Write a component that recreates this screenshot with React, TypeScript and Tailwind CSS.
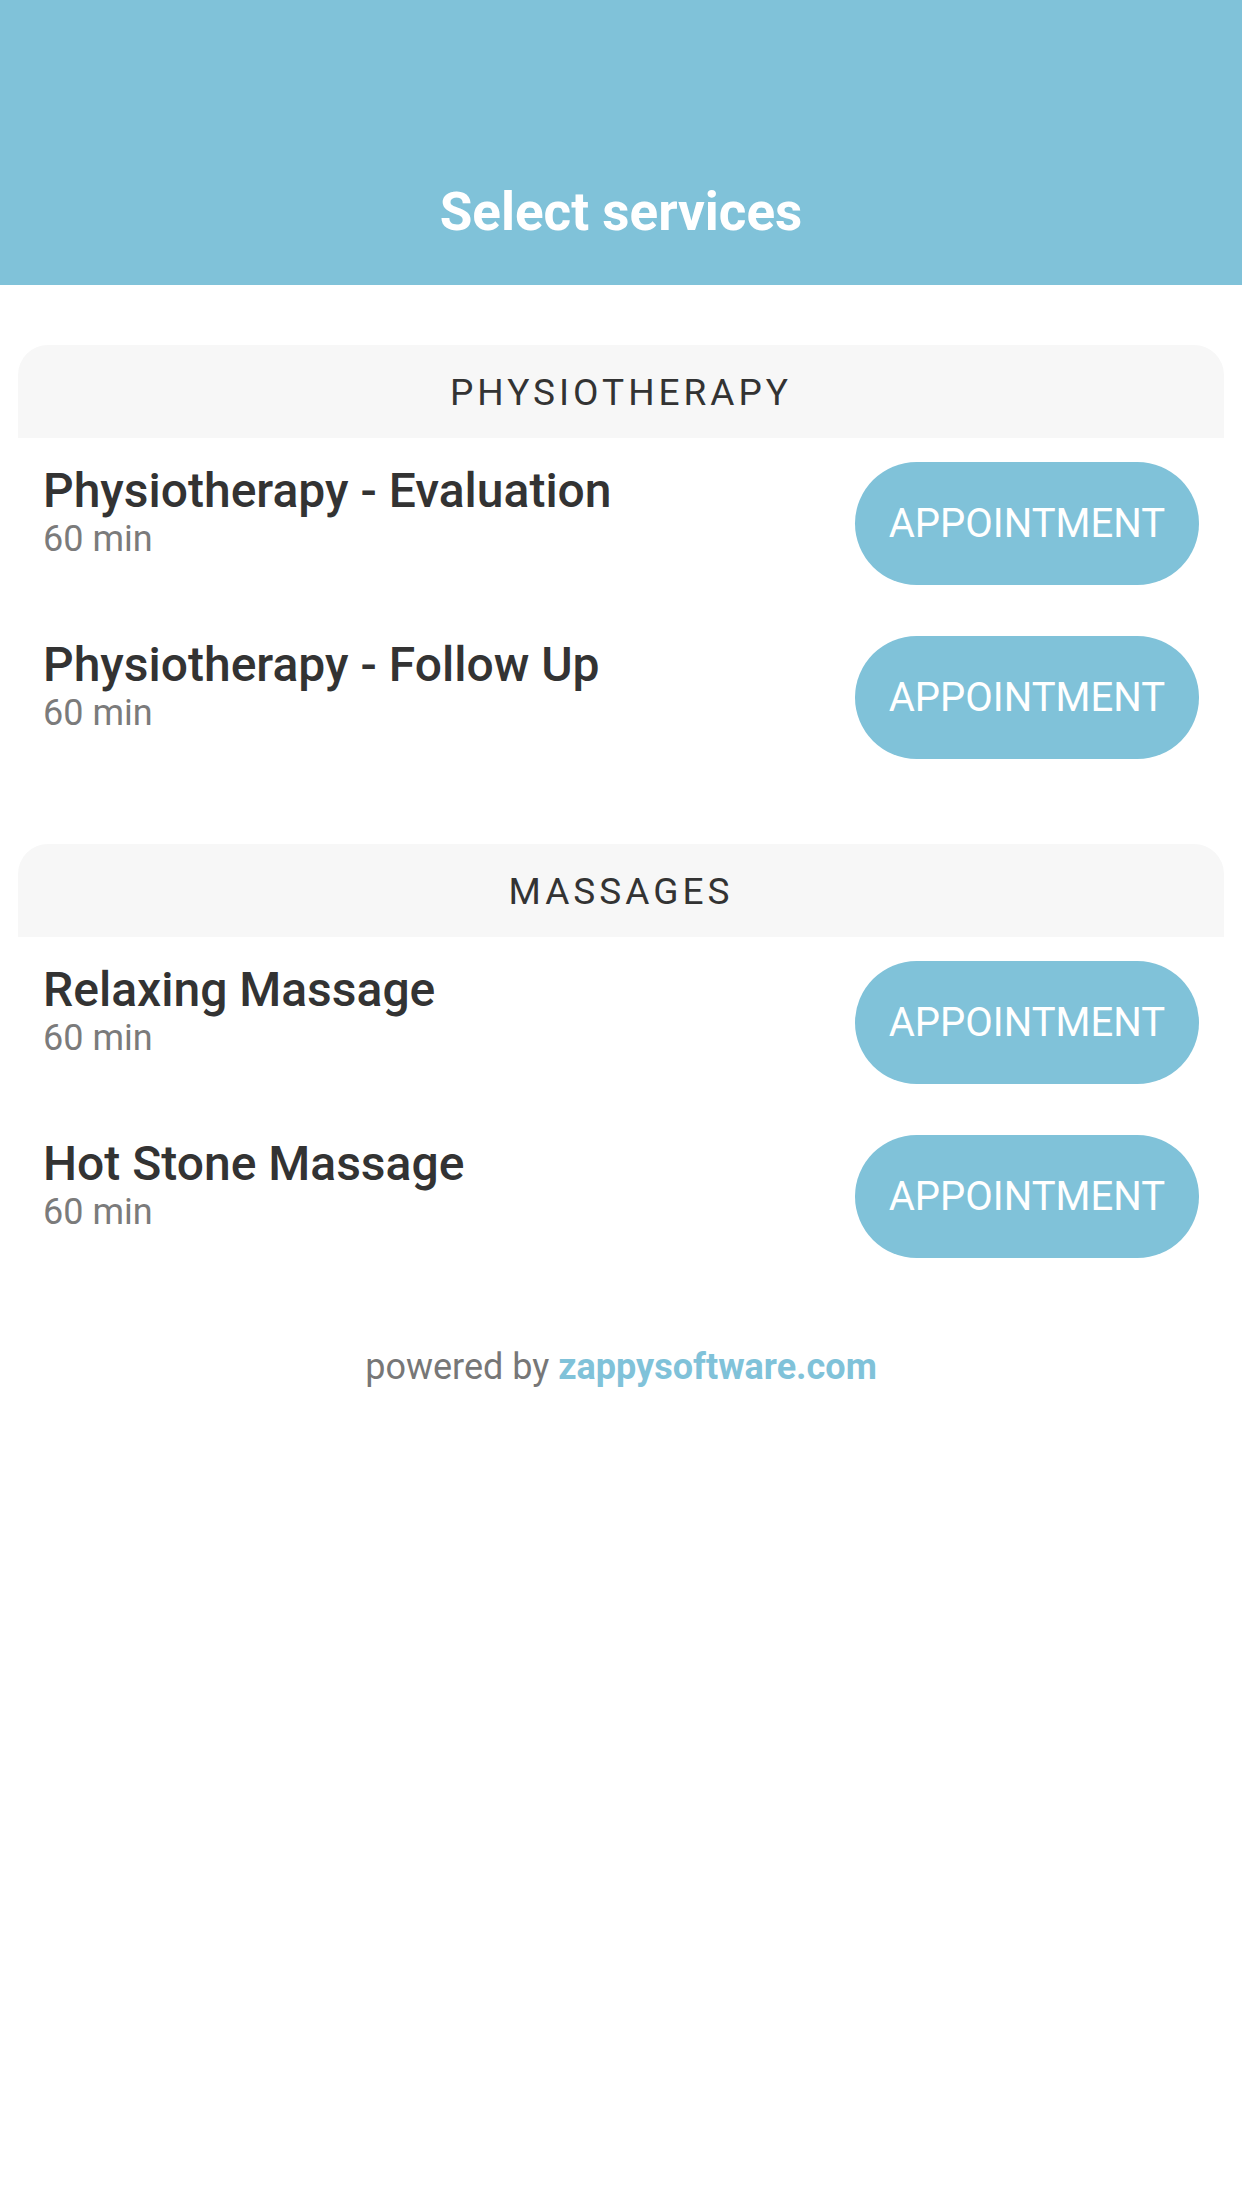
import React from "react";

type Service = {
  name: string;
  duration: string;
};

type Section = {
  title: string;
  services: Service[];
};

const sections: Section[] = [
  {
    title: "PHYSIOTHERAPY",
    services: [
      { name: "Physiotherapy - Evaluation", duration: "60 min" },
      { name: "Physiotherapy - Follow Up", duration: "60 min" },
    ],
  },
  {
    title: "MASSAGES",
    services: [
      { name: "Relaxing Massage", duration: "60 min" },
      { name: "Hot Stone Massage", duration: "60 min" },
    ],
  },
];

const ServiceRow = ({ service }: { service: Service }) => (
  <div className="flex items-start justify-between px-[25px] pt-[24px] pb-[27px]">
    <div className="flex flex-col pt-[2px]">
      <span className="text-[48px] leading-[54px] font-medium text-[#333333]">
        {service.name}
      </span>
      <span className="text-[36px] leading-[42px] text-[#7b7b7b]">{service.duration}</span>
    </div>
    <button
      type="button"
      className="h-[123px] px-[34px] rounded-full bg-[#80c2d9] text-white text-[40px] leading-none"
    >
      APPOINTMENT
    </button>
  </div>
);

const App = () => {
  return (
    <div className="min-h-screen bg-white font-['Roboto','Liberation_Sans',sans-serif]">
      {/* Top bar */}
      <header className="h-[285px] bg-[#80c2d9] flex items-end justify-center pb-[40px]">
        <h1 className="text-[53px] leading-[65px] font-bold text-white">Select services</h1>
      </header>

      <main className="px-[18px] pt-[60px]">
        {sections.map((section, i) => (
          <section key={section.title} className={i > 0 ? "mt-[58px]" : ""}>
            <div className="h-[93px] rounded-t-[30px] bg-[#f7f7f7] flex items-center justify-center">
              <span className="text-[37px] tracking-[4px] text-[#333333] pt-[2px]">
                {section.title}
              </span>
            </div>
            {section.services.map((service) => (
              <ServiceRow key={service.name} service={service} />
            ))}
          </section>
        ))}
      </main>

      <footer className="mt-[62px] text-center text-[36px] leading-[40px] text-[#777777]">
        powered by <span className="font-bold text-[#80c2d9]">zappysoftware.com</span>
      </footer>
    </div>
  );
};

export default App;
